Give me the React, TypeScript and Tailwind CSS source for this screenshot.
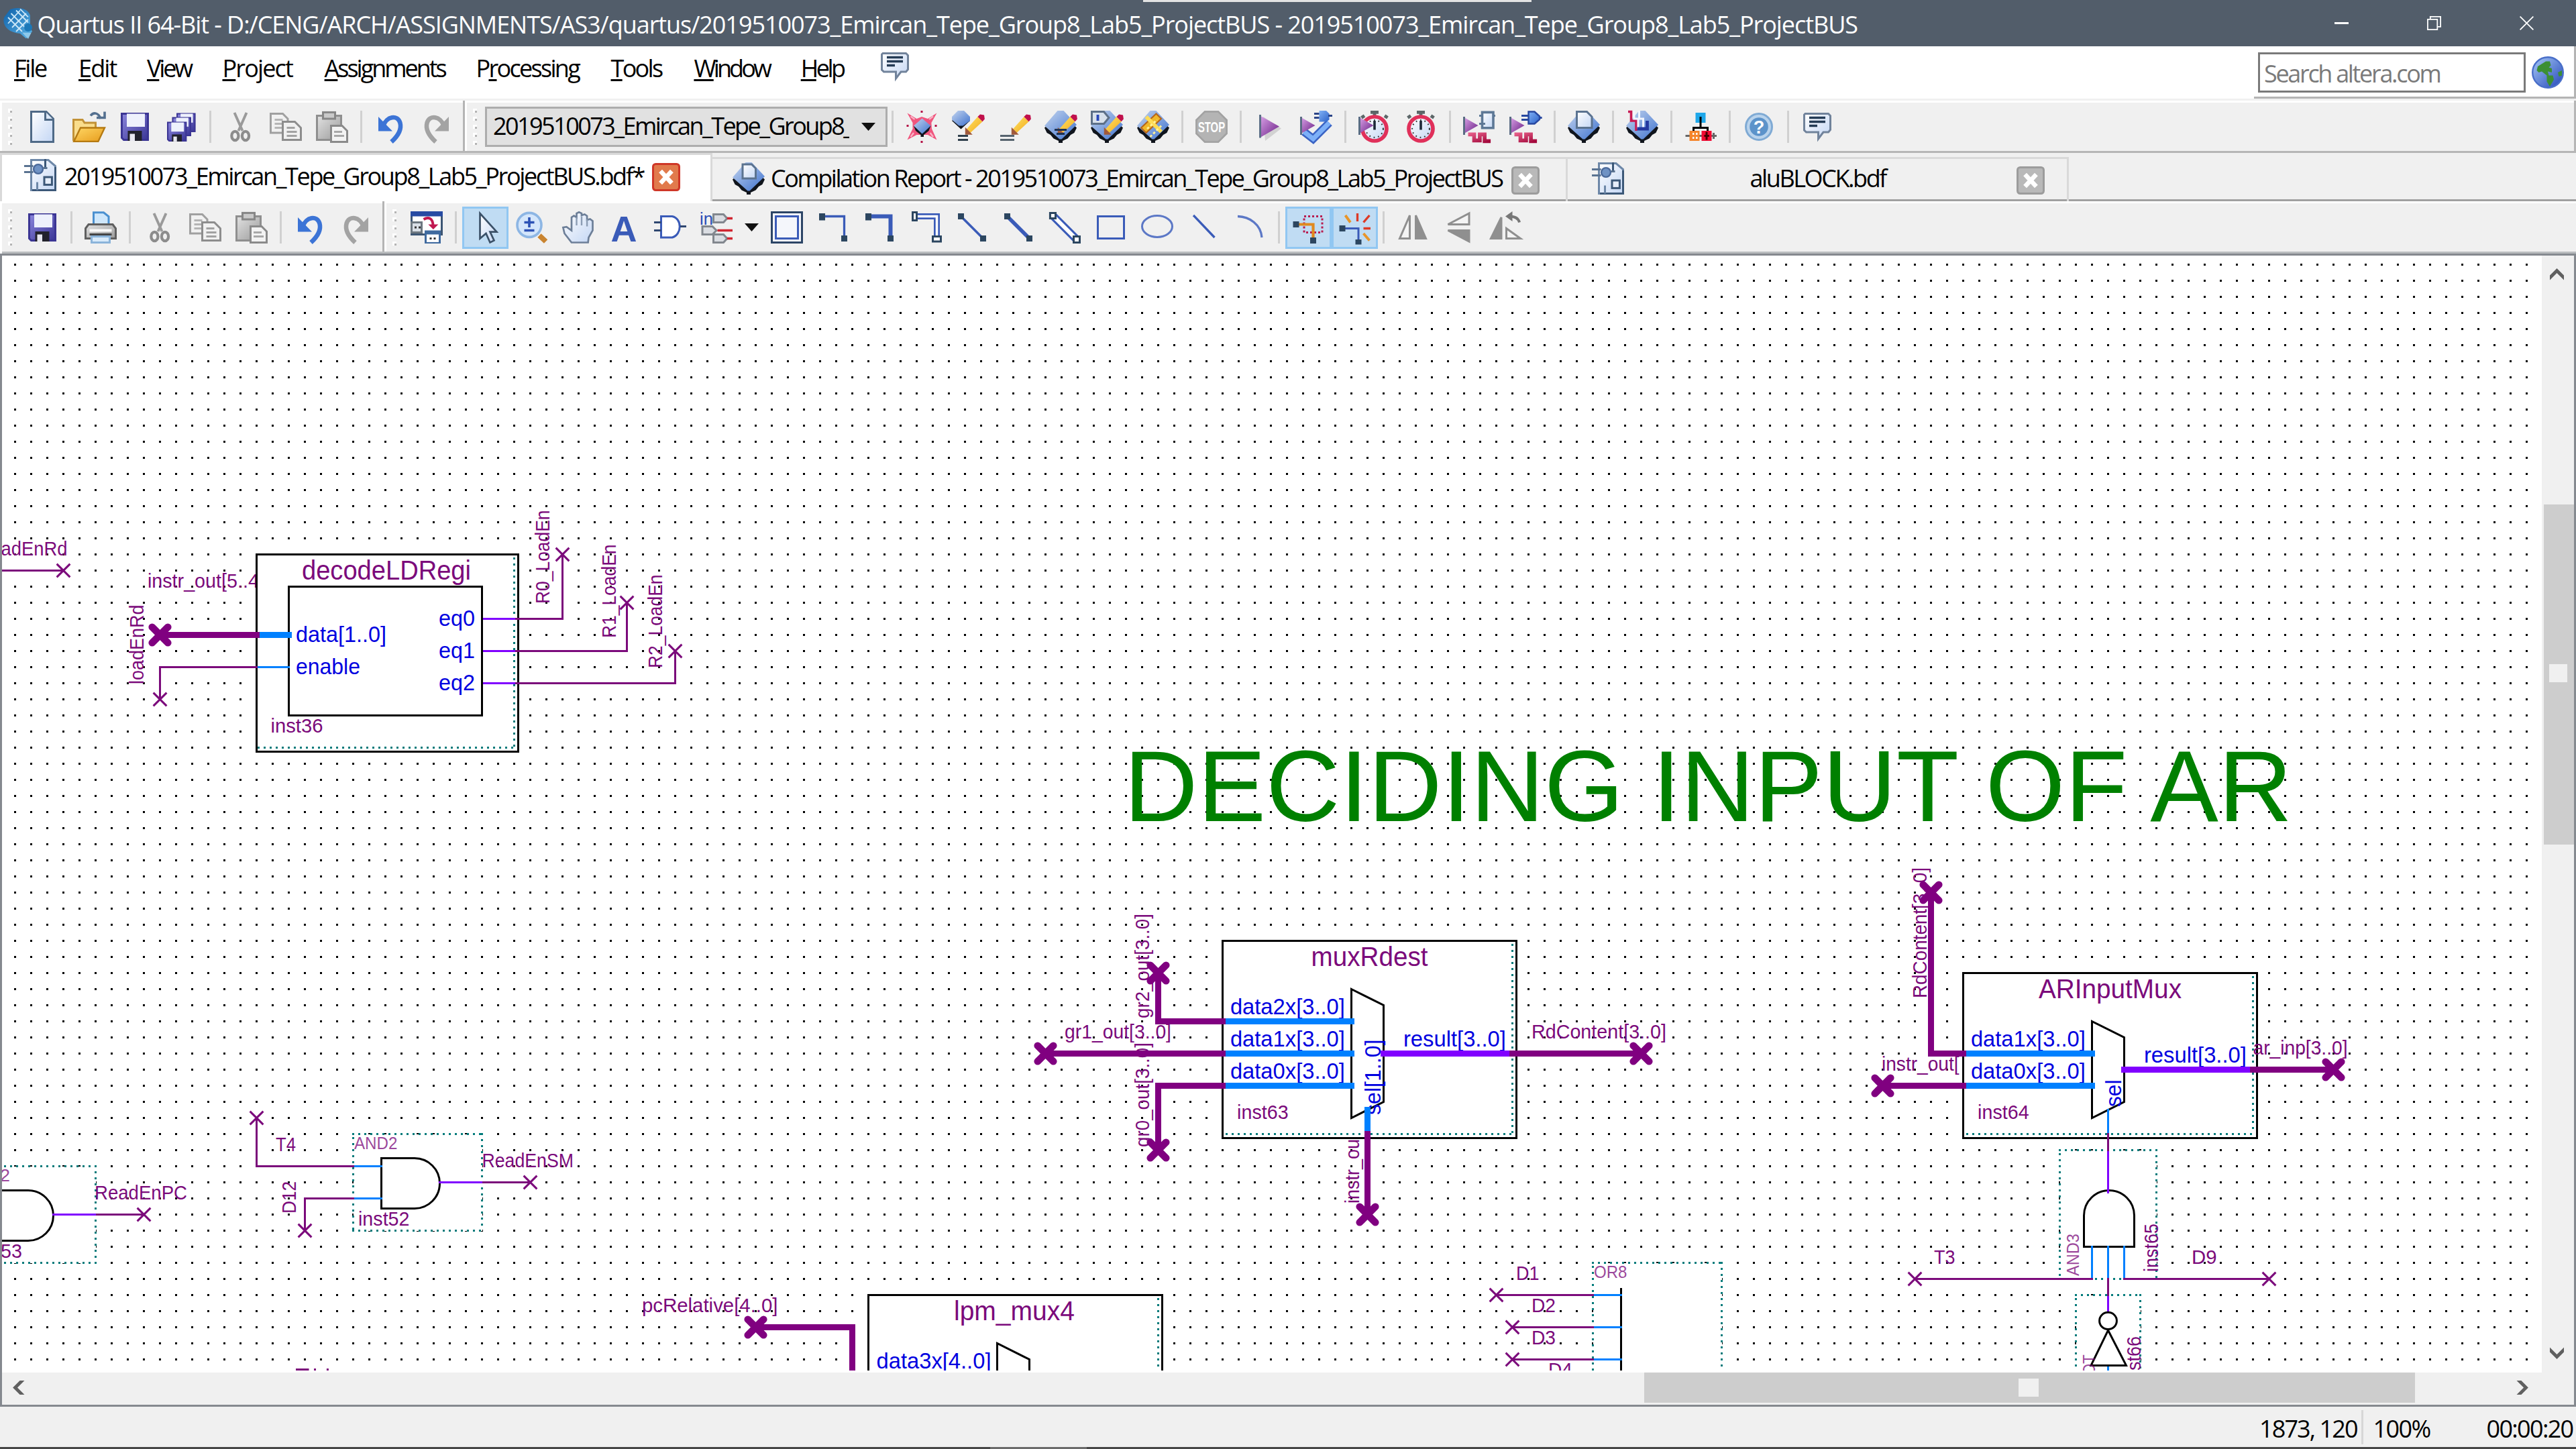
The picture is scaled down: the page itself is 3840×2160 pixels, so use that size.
import { useLayoutEffect, useRef, type ReactNode } from "react";

/* Every length below is counted in 3px steps: the root sets --spacing to 3px. */

/* ---------- text ---------- */

function Fit({ w, children, className = "" }: { w: number; children: ReactNode; className?: string }) {
  const ref = useRef<HTMLSpanElement>(null);
  useLayoutEffect(() => {
    const el = ref.current;
    if (!el) return;
    el.style.letterSpacing = "0px";
    const n = (el.textContent || "").length;
    const natural = el.getBoundingClientRect().width;
    el.style.letterSpacing = `${(w * 3 - natural) / Math.max(1, n)}px`;
  }, [w]);
  return (
    <span ref={ref} className={`inline-block whitespace-pre ${className}`}>
      {children}
    </span>
  );
}

/* ---------- icons ---------- */

function Ico({ children }: { children: ReactNode }) {
  return (
    <svg viewBox="0 0 16 16" className="size-16 shrink-0 overflow-visible">
      {children}
    </svg>
  );
}

function Defs() {
  const g = (id: string, a: string, b: string) => (
    <linearGradient id={id} x1="0" y1="0" x2="1" y2="1">
      <stop offset="0" stopColor={a} />
      <stop offset="1" stopColor={b} />
    </linearGradient>
  );
  return (
    <svg className="absolute size-0">
      <defs>
        {g("page", "#ffffff", "#c3d6f4")}
        {g("chip", "#c3d4ee", "#3f73cf")}
        {g("violet", "#d9a2e6", "#6a1f86")}
        {g("pencil", "#ffe566", "#f2a81d")}
        {g("disk", "#8b86dc", "#3a3596")}
        {g("folder", "#ffd765", "#e79c1c")}
        {g("grey", "#e2e2e2", "#9a9a9a")}
        {g("blue", "#7fb0f5", "#2d62c8")}
        {g("globe", "#a9cbf7", "#2346b8")}
        {g("logo", "#0d5fa8", "#5db6e8")}
        {g("red", "#e35b86", "#a3083b")}
      </defs>
    </svg>
  );
}

const Page = () => (
  <Ico>
    <path d="M2.5.5h7.5l3.5 3.5v11.5h-11z" fill="url(#page)" stroke="#4f6a87" />
    <path d="M9.5.5v4h4" fill="#dce8f8" stroke="#4f6a87" />
  </Ico>
);
const Folder = () => (
  <Ico>
    <path d="M.5 15V4.500h4.500l1 1.500h5.500v4" fill="#f9dd8c" stroke="#c29237" />
    <path d="M.7 15.300 4 8.500h12l-3.200 6.800z" fill="url(#folder)" stroke="#b57a12" strokeWidth=".8" />
    <path d="M9 2.500c1.500-2 4-1.500 5 1.500" fill="none" stroke="#54708f" strokeWidth="1.200" />
    <path d="M12 3.500h4V.5" fill="none" stroke="#54708f" strokeWidth="1.200" />
  </Ico>
);
const DiskShape = () => (
  <>
    <path d="M1.500 1.500h13v13h-12l-1-1z" fill="url(#disk)" stroke="#3b3594" />
    <rect x="4" y="1.500" width="9" height="6.500" fill="#eef1fc" />
    <rect x="4.500" y="10" width="7" height="5" fill="#22222c" />
    <rect x="5.500" y="11.500" width="2.500" height="3.500" fill="#e8e8f0" />
  </>
);
const Save = () => (
  <Ico>
    <DiskShape />
  </Ico>
);
const SaveAll = () => (
  <Ico>
    <g transform="translate(5 .5) scale(.68)"><DiskShape /></g>
    <g transform="translate(2.800 2.500) scale(.68)"><DiskShape /></g>
    <g transform="translate(.3 4.800) scale(.7)"><DiskShape /></g>
  </Ico>
);
const Cut = () => (
  <Ico>
    <path d="M5.500 1l4 9M11.500 1 7.500 10" stroke="#9a9a9a" strokeWidth="1.300" fill="none" />
    <ellipse cx="5.800" cy="12.500" rx="1.700" ry="2.200" fill="none" stroke="#8c8c8c" strokeWidth="1.400" />
    <ellipse cx="11" cy="12.500" rx="1.700" ry="2.200" fill="none" stroke="#8c8c8c" strokeWidth="1.400" />
  </Ico>
);
const Copy = () => (
  <Ico>
    <path d="M.5 1.500h6l2.500 2.500v7h-8.500z" fill="#f1f1f1" stroke="#a0a0a0" />
    <path d="M2.500 4.500h4M2.500 6.500h4M2.500 8.500h4" stroke="#b5b5b5" />
    <path d="M6.500 5.500h6l3 3v6h-9z" fill="#f1f1f1" stroke="#8d8d8d" />
    <path d="M8.500 8.500h4M8.500 10.500h5M8.500 12.500h5" stroke="#a2a2a2" />
  </Ico>
);
const Paste = () => (
  <Ico>
    <path d="M.5 2.500h12v12h-12z" fill="url(#grey)" stroke="#8f8f8f" />
    <rect x="3.500" y=".8" width="6" height="3.200" fill="#c9c9c9" stroke="#868686" />
    <path d="M7.500 7.500h5.500l2.500 2.500v5.500h-8z" fill="#f3f3f3" stroke="#8a8a8a" />
    <path d="M9 10.500h4M9 12.500h5" stroke="#a8a8a8" />
  </Ico>
);
const ArrowCurve = ({ c }: { c: string }) => (
  <>
    <path d="M4.500 7.500C6 2.800 11.500 1.800 12.800 6c.8 3-1 6.500-4.300 9.500" fill="none" stroke={c} strokeWidth="2.200" />
    <path d="M2 3v7.200h7z" fill={c} />
  </>
);
const Undo = () => <Ico><ArrowCurve c="#3c74d6" /></Ico>;
const Redo = () => (
  <Ico>
    <g transform="matrix(-1 0 0 1 16 0)"><ArrowCurve c="#a3a3a3" /></g>
  </Ico>
);
const ChipShape = () => (
  <>
    <path d="M0 8.500 8.500 1 16 8.500 14.800 11 13 12 11.500 13.800 9 15v1H7v-1l-2.500-1.200L3 12 1.200 11z" fill="#10151d" />
    <path d="M6.500 0h3L16 7l-7.500 7.200h-1L0 7.500z" fill="url(#chip)" />
  </>
);
const PencilShape = () => (
  <>
    <path d="M7 9.500 12.800 3l2.400 2.400L9 11.200z" fill="url(#pencil)" />
    <path d="M12.800 3 14 1.800l2 .4.300 2L15.200 5.400z" fill="#c0104c" />
    <path d="M7 9.200v2.300h2.300z" fill="#a05a3c" stroke="#a05a3c" strokeWidth=".8" />
  </>
);
const Chip = ({ children }: { children?: ReactNode }) => (
  <Ico>
    <ChipShape />
    {children}
  </Ico>
);
const Burst = () => (
  <Ico>
    <path d="M.8 1.200 5.500 4 8 3l3 1 4.500-2.800L12.800 6l.2 3 2.500 5.500L11 12H5.500L.8 14.500 3.500 9V6z" fill="#f0567e" />
    <path d="M2.500 2.800l2 1.500M13.700 2.800l-2 1.500M2.500 13l1.500-2M13.700 13l-1.500-2" stroke="#f8b3c5" strokeWidth=".8" />
    <path d="M8 0v1M8 15v1M.5 7.500h1M14.500 7.500h1" stroke="#b30f45" />
    <path d="M4 7.500h8.500l-1 2.500L9 12v1H7.500v-1L5 10z" fill="#10151d" />
    <path d="M8.200 3.800 12.500 7.500 8.200 11.500 4 7.500z" fill="url(#chip)" />
  </Ico>
);
const PencilChip = () => (
  <Ico>
    <path d="M4.500.8 9 5 4.500 9.200 0 5z" fill="#10151d" />
    <path d="M3 0h3l3 3v2L5.500 7.500h-2L0 4.500V3z" fill="url(#chip)" />
    <PencilShape />
    <path d="M3 12.500h5M3 14.500h5" stroke="#2f3f4c" />
  </Ico>
);
const PencilOnly = () => (
  <Ico>
    <PencilShape />
    <path d="M1 12.500h7M1 14.500h7" stroke="#56636e" />
  </Ico>
);
const Stop = () => (
  <Ico>
    <path d="M4.500 0h7L16 4.500v7L11.500 16h-7L0 11.500v-7z" fill="#b4b4b4" />
    <path d="M4.700.5h6.600l4.200 4.200v6.600l-4.200 4.200H4.700L.5 11.300V4.700z" fill="none" stroke="#a2a2a2" strokeWidth=".8" />
    <text x="1.300" y="10.800" fontSize="7.600" fontWeight="700" textLength="13.400" lengthAdjust="spacingAndGlyphs" fill="#fff" fontFamily='"Liberation Sans", Arial, sans-serif'>
      STOP
    </text>
  </Ico>
);
const Play = () => (
  <Ico>
    <path d="M3 3l9 5.800L4 15z" fill="#d2d2d2" />
    <path d="M1.500 2.500 11 7.800l-9.500 5.500z" fill="url(#violet)" />
    <path d="M1.500 2v11.500" stroke="#5c6f87" />
  </Ico>
);
const SmallPlay = () => (
  <>
    <path d="M.5 3.300 7.500 7.300.5 11.300z" fill="url(#violet)" />
    <path d="M.5 3v9" stroke="#5a6c84" />
  </>
);
const Check = () => (
  <Ico>
    <path d="M2 10.500 6.500 14 14.500 6" fill="none" stroke="#3a63c4" strokeWidth="4" />
    <path d="M2 10.500 6.500 14 14.500 6" fill="none" stroke="#7db0f8" strokeWidth="2.300" />
    <SmallPlay />
    <path d="M9.500 0h3.500l1.500 1.500v3L13 5.500H9.500z" fill="url(#blue)" />
    <path d="M7 1.500h2.500M7 3.500h2.500M14 2.500h2" stroke="#2b4488" />
  </Ico>
);
const Clock = ({ play }: { play?: boolean }) => (
  <Ico>
    <path d="M6 .8h4M8 1v2" stroke="#5c6668" strokeWidth="1.600" />
    <path d="M1.500 3.500l1.500-1M14.500 3.500 13 2.500" stroke="#5c6668" strokeWidth="1.600" />
    <circle cx="8" cy="9" r="6" fill="url(#page)" stroke="#e0305a" strokeWidth="1.900" />
    <circle cx="8" cy="9" r="4.300" fill="none" stroke="#333" strokeWidth=".7" strokeDasharray=".6 1.600" />
    <path d="M8 5v4.500" stroke="#1b2838" strokeWidth="1.200" />
    {play && <SmallPlay />}
  </Ico>
);
const Wave = () => <path d="M2.500 11.800H5.500v3H8.300v-3h2.400v3.300h3" fill="none" stroke="url(#red)" strokeWidth="1.900" />;
const SimPage = () => (
  <Ico>
    <path d="M9.500.8h5.500v7.800H9.500z" fill="url(#page)" stroke="#5d7896" strokeWidth="1.200" />
    <path d="M8 2.500h1.500M15 2.500h1M8 6.500h3" stroke="#5d7896" />
    <SmallPlay />
    <Wave />
  </Ico>
);
const SimGate = () => (
  <Ico>
    <path d="M9.500.5h3l2.500 2.300v1.500L12.500 6.500h-3z" fill="url(#blue)" stroke="#2848a0" strokeWidth=".8" />
    <path d="M6 2.500h3.500M6 4.500h3.500M15 3.500h1.200" stroke="#2848a0" />
    <SmallPlay />
    <Wave />
  </Ico>
);
const ChipPencilLines = () => (
  <Chip>
    <PencilShape />
    <path d="M5 9.500h6M6 11.500h4" stroke="#1e3253" />
  </Chip>
);
const ChipGatePencil = () => (
  <Chip>
    <path d="M.5.5h6l2.500 3-2.500 3h-6z" fill="#d7e0ec" stroke="#5d7088" />
    <path d="M3.500 2v3" stroke="#2846b8" strokeWidth="1.300" />
    <PencilShape />
  </Chip>
);
const ChipGrid = () => (
  <Chip>
    <path d="M2 8.500 9.500 1.500 12 4 4.500 11z" fill="#f0b72a" stroke="#b6661c" strokeWidth=".7" />
    <path d="M4.500 3 12 10.500" stroke="#ffdc55" strokeWidth="1.900" />
    <path d="M5 9 10 4.500M6.500 13l6-6" stroke="#fff19a" strokeDasharray="1.200 1" />
  </Chip>
);
const ChipPage = () => (
  <Chip>
    <path d="M4.500.5h5L12 3v5.500H4.500z" fill="url(#page)" stroke="#5b7390" />
  </Chip>
);
const ChipPins = () => (
  <Chip>
    <path d="M1 .5h1.500v4.500H5v5" fill="none" stroke="#c81a54" strokeWidth="1.200" />
    <path d="M4 0v4h2v5M6.500 0v4H8.500v5" fill="none" stroke="#f2f6ff" />
    <path d="M5.500 9h5V5" fill="none" stroke="#23389f" strokeWidth="1.600" />
  </Chip>
);
const Tree = () => (
  <Ico>
    <rect x="5.500" y="1" width="5" height="5" fill="#1fa8ea" />
    <rect x="7.500" y="3" width="1" height="1" fill="#000" />
    <path d="M8 4v4.500M4.500 10.500v-2h7v3" fill="none" stroke="#000" />
    <path d="M.5 12.500h15.500M14.500 11v3" stroke="#666" />
    <rect x="2.500" y="10" width="5" height="5" fill="#f5852a" />
    <path d="M4 11.500h.8M5.700 11.500h.8M4 13.500h.8M5.700 13.500h.8" stroke="#fff" />
    <rect x="8.500" y="10" width="5" height="5" fill="#f00a32" />
    <path d="M11 10.500v4M9.800 12.500h2.500" stroke="#400" />
  </Ico>
);
const Help = () => (
  <Ico>
    <circle cx="8" cy="8" r="6.500" fill="#b9d3ec" stroke="#7faad4" />
    <circle cx="8" cy="8" r="4.600" fill="#5c93ca" />
    <text x="8" y="11.300" fontSize="9" fontWeight="700" textAnchor="middle" fill="#fff" fontFamily='"Liberation Sans", Arial, sans-serif'>
      ?
    </text>
  </Ico>
);
const Chat = () => (
  <Ico>
    <path d="M2 1.500h11.500l1 1v7l-1 1.200H11L8.500 14V10.700H2.500l-1-1V2z" fill="url(#page)" stroke="#71839b" />
    <path d="M4 3.500h8M4 5.500h8M4 7.500h4" stroke="#243b55" strokeWidth="1.100" />
  </Ico>
);
const BdfPage = () => (
  <Ico>
    <path d="M3.500.5h8.500l3.500 3v12h-12z" fill="url(#page)" stroke="#6e88a8" />
    <path d="M10.500 0v4.500M15.500 4v11.500M4 15.500h12" stroke="#3c5878" />
    <circle cx="7" cy="5" r="2.300" fill="#6f92c4" stroke="#4a699a" strokeWidth=".8" />
    <path d="M0 3.500h4.500M0 6.500h4.500M9.500 4.500h2" stroke="#5a7391" />
    <rect x="10" y="9" width="3.800" height="3.800" fill="#e6eefa" stroke="#3c5878" />
    <path d="M6.500 11.500v4" stroke="#6e88a8" />
  </Ico>
);
const TabClose = ({ on }: { on?: boolean }) => (
  <svg viewBox="0 0 14 14" className="mt-2 size-14 shrink-0">
    <rect x=".5" y=".5" width="13" height="13" rx="1.300" fill={on ? "#e17a4c" : "#b9b9b9"} stroke={on ? "#cf3727" : "#9c9c9c"} />
    <path d="M4.200 4l5.600 6M9.800 4l-5.600 6" stroke="#fff" strokeWidth="2.200" />
  </svg>
);
const Printer = () => (
  <Ico>
    <path d="M4.500 6.500V.6h5l2.500 2v4z" fill="#cfe7fb" stroke="#4a90d0" />
    <path d="M.5 8.500 2 6.500h12l1.500 2v5H.5z" fill="url(#grey)" stroke="#5f5f5f" />
    <path d="M2.500 9.500h11" stroke="#fafafa" strokeWidth="1.300" />
    <path d="M2.500 11.500h11" stroke="#444" />
    <path d="M3.500 12.500h9v3h-9z" fill="#d8eafa" stroke="#8bb4da" />
  </Ico>
);
const Detach = () => (
  <Ico>
    <rect x=".5" y=".5" width="15" height="11" fill="#fff" stroke="#3d5674" />
    <rect x="0" y="0" width="16" height="2.500" fill="#274ba3" />
    <path d="M6.500 4c2.500-1.500 4.500-.5 4.700 3" fill="none" stroke="#c11850" strokeWidth="1.300" />
    <path d="M8.800 6.500h5l-2.500 2.500z" fill="#c11850" />
    <rect x=".5" y="5.500" width="5" height="5" fill="#d9dfe6" stroke="#6d7780" />
    <rect x="7" y="9.500" width="8" height="6.500" fill="#3f6a9f" />
    <rect x="8" y="11.500" width="6" height="3.800" fill="#fff" />
    <path d="M9.500 13.500h1M11.500 13.500h1M2 8h1M4 8h1" stroke="#333" />
  </Ico>
);
const Cursor = () => (
  <Ico>
    <path d="M5.500 1v12.500l3-2.500 2 4.500 2-1-2-4.300h3.300z" fill="url(#page)" stroke="#3b5168" strokeWidth=".9" />
  </Ico>
);
const Zoom = () => (
  <Ico>
    <path d="M12 12l3.200 3" stroke="#c98430" strokeWidth="2.600" />
    <circle cx="7" cy="6.800" r="6" fill="#d4e6fb" stroke="#8db6e4" strokeWidth="1.200" />
    <path d="M4.500 5.500h5M7 3v5M4.500 9.500h5" stroke="#2b51b5" strokeWidth="1.200" />
  </Ico>
);
const Hand = () => (
  <Ico>
    <path d="M5 15.500 1.500 11 .8 8l1.700-.3L5 9.500V3l1.200-.8L7.500 3V1l1.200-.6L10 1v1l1.500-.5 1.200.8v2l1.500-.5 1.300 1v4.700L13.500 13l-.3 2.500z" fill="url(#page)" stroke="#6d7f98" strokeWidth=".9" />
    <path d="M7.500 3v4M10 2.500V7M12.700 4v3.500" stroke="#8c9db4" strokeWidth=".8" />
  </Ico>
);
const LetterA = () => (
  <Ico>
    <text x="8" y="15" fontSize="18" fontWeight="700" textAnchor="middle" fill="#3a5bb8" fontFamily='"Liberation Sans", Arial, sans-serif'>
      A
    </text>
  </Ico>
);
const GateIco = () => (
  <Ico>
    <path d="M3.500 2.500H9c5 1 5 9 0 10.500H3.500z" fill="#fff" stroke="#3a5bb8" />
    <path d="M0 5.500h3.500M0 9.500h3.500M13 7.500h3" stroke="#2f4770" />
  </Ico>
);
const InOut = () => (
  <Ico>
    <text x="-.3" y="6.500" fontSize="8.500" fill="#2b4db5" fontFamily='"Liberation Sans", Arial, sans-serif'>
      in
    </text>
    <path d="M6.500 1.500h5l1.800 2-1.800 2h-5zM1 7.500h5l2 2-2 2H1zM6.500 11.500h5l1.800 2-1.800 2h-5z" fill="#dadde2" stroke="#82878e" />
    <path d="M13.300 3.500h2.700M8.500 9.500H16M13.300 13.500h2.700" stroke="#d02530" strokeWidth="1.100" />
  </Ico>
);
const Block = () => (
  <Ico>
    <rect x=".5" y=".5" width="15" height="15" fill="#f4f6fb" stroke="#2c4566" />
    <rect x="2.500" y="2.500" width="11" height="11" fill="#f4f6fb" stroke="#3a5bb8" />
  </Ico>
);
const Ortho = ({ w }: { w: number }) => (
  <Ico>
    <path d="M2.500 2.500h11v11" fill="none" stroke="#3a5bb8" strokeWidth={w} />
    <path d="M1 1h3v3.500H1zM12 12h3v3h-3z" fill="#2c4660" />
  </Ico>
);
const OrthoHollow = () => (
  <Ico>
    <path d="M3 2.500h10.500v11" fill="none" stroke="#3a5bb8" strokeWidth="3" />
    <path d="M3 2.500h10.500v11" fill="none" stroke="#fff" strokeWidth="1.200" />
    <path d="M1.500.5h2v4h-2zM11.500 12.500h4v2.500h-4z" fill="#fff" stroke="#2c4660" />
  </Ico>
);
const Diag = ({ w }: { w: number }) => (
  <Ico>
    <path d="M2.500 2.500 13.500 13.500" stroke="#3a5bb8" strokeWidth={w} />
    <path d="M1 1h3v3H1zM12 12h3v3h-3z" fill="#2c4660" />
  </Ico>
);
const DiagHollow = () => (
  <Ico>
    <path d="M2 2 14 14" stroke="#3a5bb8" strokeWidth="4" />
    <path d="M2 2 14 14" stroke="#fff" strokeWidth="2" />
    <path d="M.8.800h2.700v2.700H.8zM12.500 12.500h3v3h-3z" fill="#fff" stroke="#2c4660" />
  </Ico>
);
const RectIco = () => <Ico><rect x="1.500" y="2.500" width="13" height="11" fill="none" stroke="#3a5bb8" /></Ico>;
const EllipseIco = () => <Ico><ellipse cx="8" cy="7.500" rx="7.500" ry="5.300" fill="none" stroke="#5c78c6" /></Ico>;
const LineIco = () => <Ico><path d="M3 2 13.500 13" stroke="#3a5bb8" strokeWidth="1.100" /></Ico>;
const ArcIco = () => <Ico><path d="M2 2.500c6 .2 11.500 4 12 10.500" fill="none" stroke="#5c78c6" strokeWidth="1.100" /></Ico>;
const Rubber = () => (
  <Ico>
    <path d="M6 2.500h9v8H6z" fill="none" stroke="#b81c50" strokeDasharray="1 1" />
    <path d="M3 6.500h7.500v7" fill="none" stroke="#e08a1e" strokeWidth="1.400" />
    <path d="M.5 5h3v3h-3zM9 13h3v3H9z" fill="#2c4660" />
  </Ico>
);
const Snap = () => (
  <Ico>
    <path d="M3 8.500h7v6" fill="none" stroke="#3a5bb8" />
    <path d="M.5 7h3v3h-3zM8.500 14h3v2.500h-3z" fill="#2c4660" />
    <path d="M3.500 2 6 5.500M12.500 11l3 3.500" stroke="#e8952a" strokeWidth="1.300" />
    <path d="M9.500 1v4M15.500 2 12.500 5.500M12.500 8.500H16" stroke="#dd3a26" strokeWidth="1.100" />
  </Ico>
);
const FlipH = () => (
  <Ico>
    <path d="M6.500 2v11.500h-5z" fill="#f4f4f4" stroke="#8f8f8f" />
    <path d="M9.500 2v11.500h5z" fill="#8f8f8f" stroke="#8f8f8f" />
  </Ico>
);
const FlipV = () => (
  <Ico>
    <path d="M13 1v5.500H2.500z" fill="#f4f4f4" stroke="#8f8f8f" />
    <path d="M13 15V9.500H2.500z" fill="#8f8f8f" stroke="#8f8f8f" />
  </Ico>
);
const Rotate = () => (
  <Ico>
    <path d="M6 3v10.500H.800z" fill="#8f8f8f" stroke="#8f8f8f" />
    <path d="M8.500 8.500v5h7z" fill="#f4f4f4" stroke="#8f8f8f" />
    <path d="M15 5.500c-.5-2-2-3-5-3" fill="none" stroke="#777" strokeWidth="1.300" />
    <path d="M8 2.500 11.500 0v5z" fill="#777" />
  </Ico>
);

/* ---------- toolbar parts ---------- */

const Btn = ({ children }: { children: ReactNode }) => (
  <div className="flex h-21 w-23 shrink-0 items-center justify-center">{children}</div>
);
const Pressed = ({ children }: { children: ReactNode }) => (
  <div className="flex h-21 w-23 shrink-0 items-center justify-center border-3 border-[#91c7f2] bg-[#c0dcf3]">{children}</div>
);
const Sep = () => (
  <div className="flex w-6 shrink-0 justify-center">
    <div className="h-16 w-1 bg-[#d0d0d0]" />
  </div>
);
const Handle = () => (
  <div className="ml-3 flex h-18 w-2 shrink-0 flex-col justify-between">
    {[0, 1, 2, 3, 4].map((i) => (
      <div key={i} className="size-2 border-t-3 border-l-3 border-white bg-[#b4b4b4]" />
    ))}
  </div>
);
const Split = () => (
  <div className="flex h-full shrink-0">
    <div className="w-1 bg-[#b4b4b4]" />
    <div className="w-1 bg-white" />
  </div>
);

/* ---------- schematic parts ---------- */

const P = "#7b0a7b";
const BUS = "#800080";
const VI = "#8000ff";
const BL = "#0080ff";
const PIN = "#0000e0";

type LabelProps = { x: number; y: number; w: number; s?: number; c?: string; v?: boolean; o?: number; children: string };
const L = ({ x, y, w, s = 10, c = P, v, o = 1, children }: LabelProps) => (
  <text
    x={x}
    y={y}
    fontSize={s}
    fill={c}
    opacity={o}
    textLength={w}
    lengthAdjust="spacingAndGlyphs"
    transform={v ? `rotate(-90 ${x} ${y})` : undefined}
    className="whitespace-pre"
  >
    {children}
  </text>
);
const W = ({ d, c = P, w = 1 }: { d: string; c?: string; w?: number }) => (
  <path d={d} fill="none" stroke={c} strokeWidth={w} shapeRendering="crispEdges" />
);
const X1 = ({ x, y }: { x: number; y: number }) => (
  <path d={`M${x - 3.3} ${y - 3.3}l6.600 6.600M${x + 3.3} ${y - 3.3}l-6.600 6.600`} stroke={P} strokeWidth="1" />
);
const X3 = ({ x, y }: { x: number; y: number }) => (
  <path
    d={`M${x - 3.9} ${y - 3.9}l7.800 7.800M${x + 3.9} ${y - 3.9}l-7.800 7.800`}
    stroke={BUS}
    strokeWidth="3.600"
    strokeLinecap="round"
  />
);
const Box = ({ x, y, w, h, t = "#000" }: { x: number; y: number; w: number; h: number; t?: string }) => (
  <rect x={x} y={y} width={w} height={h} fill="#fff" stroke={t} strokeWidth="1" shapeRendering="crispEdges" />
);
const Dots = ({ d }: { d: string }) => (
  <path d={d} fill="none" stroke="#007a7a" strokeWidth="1" strokeDasharray="1 2" shapeRendering="crispEdges" />
);
const DotBox = ({ x, y, w, h }: { x: number; y: number; w: number; h: number }) => (
  <>
    <rect x={x} y={y} width={w} height={h} fill="#fff" shapeRendering="crispEdges" />
    <Dots d={`M${x - 0.5} ${y}h${w}M${x - 0.5} ${y + h}h${w + 1}M${x} ${y + 1.5}v${h - 1}M${x + w} ${y - 0.5}v${h}`} />
  </>
);

function Schematic() {
  return (
    <svg
      viewBox="1 127 1262 555"
      className="block h-555 w-1262"
      fontFamily='"Liberation Sans", Arial, sans-serif'
    >
      <defs>
        <pattern id="grid" x="0" y="0" width="8" height="8" patternUnits="userSpaceOnUse">
          <rect x="7" y="3" width="1" height="1" fill="#000" shapeRendering="crispEdges" />
        </pattern>
      </defs>
      <rect x="1" y="127" width="1262" height="555" fill="#fff" />
      <rect x="1" y="127" width="1257" height="555" fill="url(#grid)" />

      {/* heading */}
      <L x={558.5} y={408} w={580.500} s={50} c="#008000">DECIDING INPUT OF AR</L>

      {/* decodeLDRegi */}
      <L x={0.500} y={276} w={33}>adEnRd</L>
      <W d="M1 283.500H31.500" />
      <X1 x={31.5} y={283.5} />
      <L x={73.300} y={292} w={58}>instr_out[5..4]</L>
      <Box x={127.5} y={275.5} w={130} h={98} />
      <Dots d="M255.500 277v94M128 371.500h127" />
      <Box x={143.5} y={291.5} w={96} h={64} />
      <L x={150} y={288} w={84} s={13.3}>decodeLDRegi</L>
      <L x={147} y={319} w={45} s={11} c={PIN}>data[1..0]</L>
      <L x={147} y={335} w={32} s={11} c={PIN}>enable</L>
      <L x={218} y={311} w={18} s={11} c={PIN}>eq0</L>
      <L x={218} y={327} w={18} s={11} c={PIN}>eq1</L>
      <L x={218} y={343} w={18} s={11} c={PIN}>eq2</L>
      <L x={134.5} y={364} w={26}>inst36</L>
      <W d="M240 307.500h16M240 323.500h16M240 339.500h16" c={VI} />
      <W d="M256 307.500H279.500V275.500M256 323.500H311.500V299.500M256 339.500H335.500V323.500" />
      <X1 x={279.5} y={275.5} />
      <X1 x={311.5} y={299.5} />
      <X1 x={335.5} y={323.5} />
      <L x={273} y={300} w={46.500} v>R0_LoadEn</L>
      <L x={306} y={317} w={46.500} v>R1_LoadEn</L>
      <L x={329} y={332} w={46.500} v>R2_LoadEn</L>
      <L x={71.3} y={340} w={39.500} v>loadEnRd</L>
      <W d="M79.500 315.500H129" c={BUS} w={3} />
      <W d="M129 315.500h16" c={BL} w={3} />
      <X3 x={79.5} y={315.5} />
      <W d="M128 331.500H79.500V347.500" />
      <W d="M128 331.500h16" c={BL} />
      <X1 x={79.5} y={347.5} />

      {/* AND2 gates */}
      <DotBox x={-60.5} y={579.5} w={108} h={48} />
      <path d="M-10 591.500H14A12.500 12.500 0 0 1 14 616.500H-10" fill="#fff" stroke="#000" />
      <L x={-19} y={587} w={24} s={8.7} o={0.75}>AND2</L>
      <L x={-14.5} y={625} w={25.5}>inst53</L>
      <W d="M26 603.500h21.500" c={VI} />
      <W d="M47.500 603.500H71.500" />
      <X1 x={71.5} y={603.5} />
      <L x={47} y={596} w={46}>ReadEnPC</L>

      <DotBox x={175.5} y={563.5} w={64} h={48} />
      <path d="M189.500 575.500H206A12.500 12.500 0 0 1 206 600.500H189.500z" fill="#fff" stroke="#000" />
      <L x={176} y={571} w={21.500} s={8.7} o={0.75}>AND2</L>
      <L x={178} y={609} w={25.5}>inst52</L>
      <L x={137} y={572} w={10}>T4</L>
      <L x={147} y={603} w={16} v>D12</L>
      <L x={239.5} y={580} w={45.5}>ReadEnSM</L>
      <W d="M127.500 555.500V579.500H176M176 595.500H151.500V611.500M239.500 587.500H263.500" />
      <W d="M176 579.500h14M176 595.500h14" c={BL} />
      <W d="M218 587.500h21.500" c={VI} />
      <X1 x={127.5} y={555.5} />
      <X1 x={151.5} y={611.5} />
      <X1 x={263.5} y={587.5} />
      <path d="M147 680h6.500v1h-6.500zM156 680h1v1h-1zM162.300 680h1v1h-1z" fill={P} />

      {/* lpm_mux4 */}
      <L x={319} y={652} w={67.5}>pcRelative[4..0]</L>
      <W d="M375.500 659.500H423.500V682" c={BUS} w={3} />
      <X3 x={375.5} y={659.5} />
      <Box x={431.5} y={643.5} w={146} h={60} />
      <Dots d="M575.500 645v40" />
      <L x={474} y={656} w={60} s={13.3}>lpm_mux4</L>
      <L x={435.5} y={680} w={57} s={11} c={PIN}>data3x[4..0]</L>
      <path d="M495.500 690V667.500L511.500 675.500V690" fill="#fff" stroke="#000" />

      {/* muxRdest */}
      <L x={571} y={506} w={52} v>gr2_out[3..0]</L>
      <L x={571} y={570} w={52} v>gr0_out[3..0]</L>
      <L x={529} y={516} w={53}>gr1_out[3..0]</L>
      <L x={675.3} y={598} w={34.500} v>instr_out</L>
      <Box x={607.5} y={467.5} w={146} h={98} />
      <Dots d="M751.500 469v94M609 563.500h142" />
      <L x={651.500} y={480} w={58} s={13.3}>muxRdest</L>
      <L x={611.300} y={504} w={57} s={11} c={PIN}>data2x[3..0]</L>
      <L x={611.300} y={520} w={57} s={11} c={PIN}>data1x[3..0]</L>
      <L x={611.300} y={536} w={57} s={11} c={PIN}>data0x[3..0]</L>
      <path d="M671.500 491.500L687.500 499.500V547.500L671.500 555.500z" fill="#fff" stroke="#000" />
      <L x={686} y={554} w={37.500} s={11} c={PIN} v>sel[1..0]</L>
      <L x={697.300} y={520} w={51} s={11} c={PIN}>result[3..0]</L>
      <L x={614.700} y={556} w={25.500}>inst63</L>
      <W d="M575.500 483.500V507.500H609M519.500 523.500H609M575.500 571.500V539.500H609M750 523.500H815.500M679.500 562V603.500" c={BUS} w={3} />
      <W d="M609 507.500h64M609 523.500h64M609 539.500h64M679.500 550v12" c={BL} w={3} />
      <W d="M686 523.500h64" c={VI} w={3} />
      <path d="M574 506h3v3h-3zM574 538h3v3h-3z" fill={BUS} />
      <X3 x={575.5} y={483.5} />
      <X3 x={519.5} y={523.5} />
      <X3 x={575.5} y={571.5} />
      <X3 x={815.5} y={523.5} />
      <X3 x={679.5} y={603.5} />
      <L x={761} y={516} w={67}>RdContent[3..0]</L>

      {/* ARInputMux */}
      <L x={957.3} y={496} w={65} v>RdContent[3..0]</L>
      <L x={935} y={532} w={38.500}>instr_out[</L>
      <Box x={975.5} y={483.5} w={146} h={82} />
      <Dots d="M1119.500 485v78M977 563.500h142" />
      <L x={1013} y={496} w={71} s={13.3}>ARInputMux</L>
      <L x={979.300} y={520} w={57} s={11} c={PIN}>data1x[3..0]</L>
      <L x={979.300} y={536} w={57} s={11} c={PIN}>data0x[3..0]</L>
      <path d="M1039.500 507.500L1055.500 515.500V547.500L1039.500 555.500z" fill="#fff" stroke="#000" />
      <L x={1054} y={550} w={13.500} s={11} c={PIN} v>sel</L>
      <L x={1065.300} y={528} w={51} s={11} c={PIN}>result[3..0]</L>
      <L x={982.700} y={556} w={25.500}>inst64</L>
      <L x={1119.500} y={524} w={47}>ar_inp[3..0]</L>
      <W d="M959.500 443.500V523.500H977M935.500 539.500H977M1118 531.500H1159.500" c={BUS} w={3} />
      <path d="M958 522h3v3h-3z" fill={BUS} />
      <W d="M977 523.500h64M977 539.500h64" c={BL} w={3} />
      <W d="M1054 531.500h64" c={VI} w={3} />
      <X3 x={959.5} y={443.5} />
      <X3 x={935.5} y={539.5} />
      <X3 x={1159.5} y={531.5} />

      {/* AND3 and NOT */}
      <DotBox x={1023.5} y={571.5} w={48} h={64} />
      <W d="M1047.500 551v12" c={BL} />
      <W d="M1047.500 563v9" />
      <path d="M1035.500 619.500V604A12.500 12.500 0 0 1 1060.500 604V619.500z" fill="#fff" stroke="#000" />
      <W d="M1047.500 572v21" c={VI} />
      <W d="M1039.500 619v16M1047.500 619v16M1055.500 619v16" c={BL} />
      <L x={1033} y={634} w={21} s={8.7} o={0.75} v>AND3</L>
      <L x={1072.300} y={632} w={24} v>inst65</L>
      <L x={961} y={628} w={10.500}>T3</L>
      <L x={1089} y={628} w={12.500}>D9</L>
      <W d="M951.500 635.500H1040M1055 635.500H1127.500" />
      <X1 x={951.5} y={635.5} />
      <X1 x={1127.5} y={635.5} />
      <DotBox x={1031.5} y={643.5} w={32} h={64} />
      <W d="M1047.500 635v9" />
      <W d="M1047.500 644v9" c={VI} />
      <ellipse cx="1047.500" cy="656.300" rx="4.300" ry="4.200" fill="#fff" stroke="#000" />
      <path d="M1047.500 661L1056.500 678.500H1039z" fill="#fff" stroke="#000" />
      <W d="M1047.500 679v2" c={BL} />
      <L x={1041} y={689} w={16} s={8.7} o={0.75} v>NOT</L>
      <L x={1063.700} y={688} w={24} v>inst66</L>

      {/* OR8 */}
      <DotBox x={791.5} y={627.5} w={64} h={96} />
      <L x={792} y={635} w={16.500} s={8.7} o={0.75}>OR8</L>
      <W d="M805.500 640V690" c="#000" />
      <W d="M743.500 643.500H792M751.500 659.500H792M751.500 675.500H792" />
      <W d="M792 643.500h14M792 659.500h14M792 675.500h14" c={BL} />
      <X1 x={743.5} y={643.5} />
      <X1 x={751.5} y={659.5} />
      <X1 x={751.5} y={675.5} />
      <L x={753.300} y={636} w={11.500}>D1</L>
      <L x={761} y={652} w={12}>D2</L>
      <L x={761} y={668} w={12}>D3</L>
      <L x={769.300} y={684} w={12}>D4</L>
      <rect x="1" y="681" width="1262" height="1" fill="#fff" />
    </svg>
  );
}

/* ---------- window sections ---------- */

function TitleBar() {
  return (
    <header className="relative flex h-23 items-center bg-[#525d6a] pl-1 text-white">
      <svg viewBox="0 0 16 16" className="size-16 shrink-0">
        <path d="M4 1C8-.5 13 .5 14 4v6l1 2-3 3.500L9 13C3 12.500 0 9 1 5z" fill="url(#logo)" />
        <path d="M7 1.500l6 6M4.500 3l8 8M3 5l7 7M9 .8l4 4M12 3 5 10M13 6l-6 6M9 1.500 3 8" stroke="#cbe7f8" strokeWidth=".6" />
        <circle cx="13" cy="10" r="2" fill="#1b78b8" />
        <path d="M10 12.500l3 3.200 1.500-3z" fill="#8ec9ea" />
      </svg>
      <Fit w={904.5} className="ml-1.5 pt-1.5 text-[36px]">
        Quartus II 64-Bit - D:/CENG/ARCH/ASSIGNMENTS/AS3/quartus/2019510073_Emircan_Tepe_Group8_Lab5_ProjectBUS - 2019510073_Emircan_Tepe_Group8_Lab5_ProjectBUS
      </Fit>
      <div className="absolute top-0 left-568 h-1 w-193 bg-[#e3e3e3]" />
      <div className="mr-1.5 ml-auto flex items-center">
        <div className="flex w-46 justify-center">
          <div className="h-[3px] w-7 bg-white" />
        </div>
        <div className="flex w-46 justify-center">
          <svg viewBox="0 0 7 7" className="size-7" fill="none" stroke="#fff" strokeWidth=".6">
            <path d="M.3 1.600h4.800v5.100H.3zM1.600 1.600V.3h5.100v5h-1.600" />
          </svg>
        </div>
        <div className="flex w-46 justify-center">
          <svg viewBox="0 0 7 7" className="size-7" stroke="#fff" strokeWidth=".6">
            <path d="M.2.2l6.600 6.600M6.800.2.2 6.800" />
          </svg>
        </div>
      </div>
    </header>
  );
}

const MENU: { a: string; u: string; b: string; w: number; gap: number }[] = [
  { a: "", u: "F", b: "ile", w: 16, gap: 7 },
  { a: "", u: "E", b: "dit", w: 18.8, gap: 16 },
  { a: "", u: "V", b: "iew", w: 22, gap: 15.2 },
  { a: "", u: "P", b: "roject", w: 34.8, gap: 15.5 },
  { a: "", u: "A", b: "ssignments", w: 60, gap: 15.9 },
  { a: "P", u: "r", b: "ocessing", w: 51.2, gap: 15.3 },
  { a: "", u: "T", b: "ools", w: 25.3, gap: 15.8 },
  { a: "", u: "W", b: "indow", w: 37.5, gap: 16 },
  { a: "", u: "H", b: "elp", w: 21.3, gap: 15.6 },
];

function MenuBar() {
  return (
    <nav className="flex h-26 items-start bg-white">
      {MENU.map((m) => (
        <div key={m.b} className="flex h-22 items-center text-[36px]" style={{ marginLeft: m.gap * 3 }}>
          <Fit w={m.w}>
            {m.a}
            <span className="underline decoration-[3px] underline-offset-[3px]">{m.u}</span>
            {m.b}
          </Fit>
        </div>
      ))}
      <div className="mt-2 ml-17.5">
        <Chat />
      </div>
      <div className="ml-auto flex h-26 w-160 items-start border-r-3 border-b-3 border-[#b4b4b4] pl-2">
        <div className="mt-3 flex h-20 w-133 items-center border-3 border-[#7a7a7a] bg-white pl-2 text-[36px] text-[#7a7a7a]">
          <Fit w={87.5} className="pt-1.5">Search altera.com</Fit>
        </div>
        <div className="mt-5 ml-3">
          <Ico>
            <circle cx="8" cy="8" r="7.600" fill="url(#globe)" stroke="#4a6fc9" strokeWidth=".8" />
            <path d="M3 5l4-2.500h2l.5 2-1 1 1.500.5v2l-2-.5.500 2h2l.5 2L9 15l-1.500-2.500V9.500L5 7.500 3.500 8 2.500 7zM13 8l2-1v2.500L13.500 10z" fill="#3c8f33" />
          </Ico>
        </div>
      </div>
    </nav>
  );
}

const Caret = () => (
  <svg viewBox="0 0 7 4" className="h-4 w-7 shrink-0">
    <path d="M0 0h7L3.500 4z" fill="#111" />
  </svg>
);

function MainToolbar() {
  return (
    <div className="flex h-27 flex-col border-t-3 border-[#f0f0f0] bg-white">
      <div className="flex h-26 items-center border-r-3 border-b-3 border-[#b6b6b6] bg-[#f0f0f0] shadow-[inset_3px_3px_0_#fff]">
        <div className="flex h-full w-230 items-center pt-1">
          <div className="pl-1"><Handle /></div>
          <div className="flex items-center pl-3.5">
            <Btn><Page /></Btn>
            <Btn><Folder /></Btn>
            <Btn><Save /></Btn>
            <Btn><SaveAll /></Btn>
            <Sep />
            <Btn><Cut /></Btn>
            <Btn><Copy /></Btn>
            <Btn><Paste /></Btn>
            <Sep />
            <Btn><Undo /></Btn>
            <Btn><Redo /></Btn>
          </div>
        </div>
        <Split />
        <div className="flex h-full items-center pt-1">
          <Handle />
          <div className="ml-4 flex h-20 w-200 items-center justify-between border-3 border-[#adadad] bg-[#e1e1e1] pr-5 pb-1 pl-3 text-[36px]">
            <div className="w-177 overflow-hidden py-1">
              <Fit w={178.5}>2019510073_Emircan_Tepe_Group8_</Fit>
            </div>
            <div className="pt-1"><Caret /></div>
          </div>
          <div className="flex w-5.5 pl-2">
            <div className="h-16 w-1 bg-[#d0d0d0]" />
          </div>
          <Btn><Burst /></Btn>
          <Btn><PencilChip /></Btn>
          <Btn><PencilOnly /></Btn>
          <Btn><ChipPencilLines /></Btn>
          <Btn><ChipGatePencil /></Btn>
          <Btn><ChipGrid /></Btn>
          <Sep />
          <Btn><Stop /></Btn>
          <Sep />
          <Btn><div className="pl-3"><Play /></div></Btn>
          <Btn><Check /></Btn>
          <Sep />
          <Btn><Clock play /></Btn>
          <Btn><Clock /></Btn>
          <Sep />
          <Btn><SimPage /></Btn>
          <Btn><SimGate /></Btn>
          <Sep />
          <Btn><ChipPage /></Btn>
          <Sep />
          <Btn><ChipPins /></Btn>
          <Sep />
          <Btn><Tree /></Btn>
          <Sep />
          <Btn><Help /></Btn>
          <Sep />
          <Btn><Chat /></Btn>
        </div>
      </div>
    </div>
  );
}

function Tabs() {
  return (
    <div className="flex h-24 items-end bg-[#f0f0f0] text-[36px]">
      <div className="flex h-24 w-354 items-center border-t-3 border-r-3 border-l-3 border-[#d9d9d9] bg-white pb-3 pl-11">
        <BdfPage />
        <Fit w={288} className="ml-4 pt-1.5">2019510073_Emircan_Tepe_Group8_Lab5_ProjectBUS.bdf*</Fit>
        <div className="ml-4"><TabClose on /></div>
      </div>
      <div className="flex h-22 w-425 items-center border-t-3 border-r-3 border-[#d9d9d9] pb-2 pl-10 shadow-[inset_0_-3px_0_#a0a0a0]">
        <Chip>
          <path d="M5 1h4.500L11.500 3v5H5z" fill="url(#page)" stroke="#5b7390" />
        </Chip>
        <Fit w={363.5} className="ml-3 pt-0.5">Compilation Report - 2019510073_Emircan_Tepe_Group8_Lab5_ProjectBUS</Fit>
        <div className="ml-4.5"><TabClose /></div>
      </div>
      <div className="flex h-22 w-249 items-center border-t-3 border-r-3 border-[#d9d9d9] pb-2 pl-12 shadow-[inset_0_-3px_0_#a0a0a0]">
        <BdfPage />
        <Fit w={67.5} className="ml-62.5 pt-0.5">aluBLOCK.bdf</Fit>
        <div className="ml-65"><TabClose /></div>
      </div>
      <div className="h-1 flex-1 bg-[#a0a0a0]" />
    </div>
  );
}

function EditorToolbar() {
  return (
    <div className="flex h-27 items-center border-b-3 border-[#85898f] bg-[#f0f0f0] shadow-[inset_3px_3px_0_#fff,inset_0_-3px_0_#b9bcbe]">
      <div className="flex h-full w-190 items-center">
        <div className="pl-1"><Handle /></div>
        <div className="flex items-center pl-3.5">
          <Btn><Save /></Btn>
          <Sep />
          <Btn><Printer /></Btn>
          <Sep />
          <Btn><Cut /></Btn>
          <Btn><Copy /></Btn>
          <Btn><Paste /></Btn>
          <Sep />
          <Btn><Undo /></Btn>
          <Btn><Redo /></Btn>
        </div>
      </div>
      <div className="h-full pb-1"><Split /></div>
      <Handle />
      <div className="flex items-center pl-3.5">
        <Btn><Detach /></Btn>
        <Sep />
        <Pressed><Cursor /></Pressed>
        <Btn><Zoom /></Btn>
        <Btn><Hand /></Btn>
        <Btn><LetterA /></Btn>
        <Btn><GateIco /></Btn>
        <Btn><InOut /></Btn>
        <div className="flex w-12 justify-center"><Caret /></div>
        <Btn><Block /></Btn>
        <Btn><Ortho w={1.1} /></Btn>
        <Btn><Ortho w={2} /></Btn>
        <Btn><OrthoHollow /></Btn>
        <Btn><Diag w={1.2} /></Btn>
        <Btn><Diag w={1.9} /></Btn>
        <Btn><DiagHollow /></Btn>
        <Btn><RectIco /></Btn>
        <Btn><EllipseIco /></Btn>
        <Btn><LineIco /></Btn>
        <Btn><ArcIco /></Btn>
        <Sep />
        <Pressed><Rubber /></Pressed>
        <Pressed><Snap /></Pressed>
        <Sep />
        <Btn><FlipH /></Btn>
        <Btn><FlipV /></Btn>
        <Btn><Rotate /></Btn>
      </div>
    </div>
  );
}

const Chevron = ({ turn }: { turn: string }) => (
  <svg viewBox="0 0 7 7" className={`size-7 shrink-0 ${turn}`}>
    <path d="M0 4.200 3.500.7 7 4.200V6.500L3.500 3 0 6.500z" fill="#606060" />
  </svg>
);

export default function App() {
  return (
    <div className="flex h-[2160px] w-[3840px] flex-col overflow-hidden bg-[#f0f0f0] font-['Open_Sans','Noto_Sans',sans-serif] leading-none text-black [--spacing:3px]">
      <Defs />
      <TitleBar />
      <MenuBar />
      <MainToolbar />
      <Tabs />
      <EditorToolbar />
      <main className="flex h-572 flex-col border-r-3 border-b-3 border-l-3 border-[#85898f] bg-[#f0f0f0]">
        <div className="flex h-555">
          <Schematic />
          <div className="flex w-16 flex-col pt-5.5 pb-6">
            <div className="ml-4"><Chevron turn="rotate-0" /></div>
            <div className="mt-111 flex h-169 w-15 items-center justify-center self-end bg-[#cdcdcd] pr-1 pb-1">
              <div className="h-9 w-9 bg-[#f0f0f0]" />
            </div>
            <div className="mt-auto ml-4"><Chevron turn="rotate-180" /></div>
          </div>
        </div>
        <div className="flex h-16 items-start">
          <div className="mt-4 ml-4.5"><Chevron turn="-rotate-90" /></div>
          <div className="ml-804.5 flex h-15 w-383 items-center justify-center bg-[#cdcdcd] pr-1">
            <div className="h-9 w-10 bg-[#f0f0f0]" />
          </div>
          <div className="mt-4 ml-50"><Chevron turn="rotate-90" /></div>
        </div>
      </main>
      <footer className="flex h-20 items-center justify-end pr-1.5 text-[36px]">
        <Fit w={48.5} className="pt-2">1873, 120</Fit>
        <div className="ml-2 h-17 w-1 bg-[#d7d7d7]" />
        <Fit w={28.3} className="ml-5 pt-2">100%</Fit>
        <Fit w={43} className="ml-28 pt-2">00:00:20</Fit>
      </footer>
      <div className="h-1 bg-[#464646] pl-492">
        <div className="h-1 w-48 bg-[#6b6b6b]" />
      </div>
    </div>
  );
}
